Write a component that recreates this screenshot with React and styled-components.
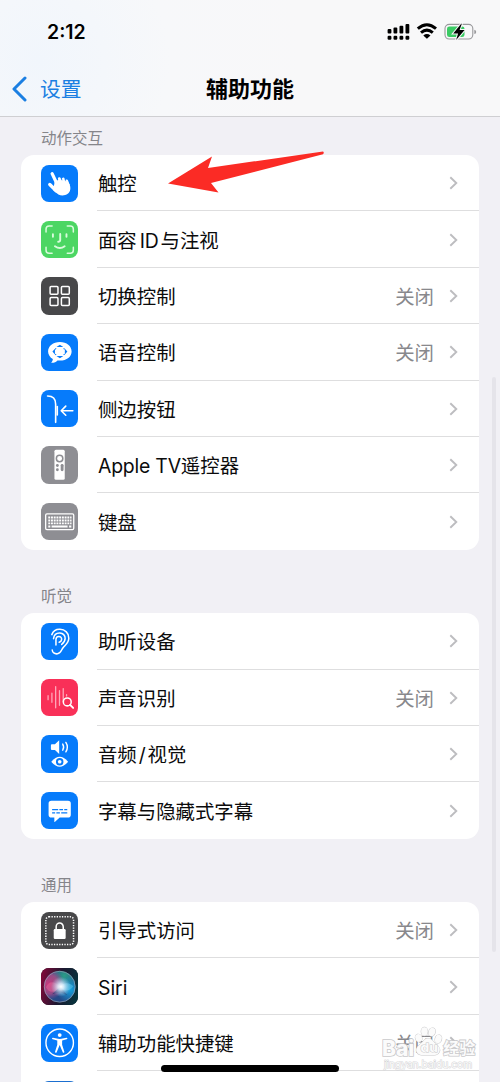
import React from "react";
import styled, { createGlobalStyle } from "styled-components";

const GlobalStyle = createGlobalStyle`
  html, body {
    margin: 0;
    padding: 0;
    background: #f1f0f5;
  }

  * {
    box-sizing: border-box;
  }
`;

const Phone = styled.div`
  position: relative;
  display: flex;
  flex-direction: column;
  width: 500px;
  height: 1082px;
  overflow: hidden;
  background: #f1f0f5;
  color: #0b0b0c;
  font-family: Inter, "Noto Sans CJK SC", sans-serif;
`;

const Header = styled.header`
  flex: none;
  height: 117px;
  border-bottom: 1px solid #cfcfd2;
  background: radial-gradient(circle at 40px 60px, #f1f6fc 0, #f7f8fa 130px, #f8f8f9 260px);
`;

const StatusBar = styled.div`
  display: flex;
  align-items: center;
  justify-content: space-between;
  height: 62px;
  padding: 2px 23px 0 47px;
  color: #000;
  font-size: 19.5px;
  font-weight: 600;
`;

const NavBar = styled.nav`
  display: grid;
  grid-template-columns: 1fr auto 1fr;
  align-items: center;
  height: 54px;
  padding: 0 12px;
`;

const Back = styled.a`
  display: flex;
  align-items: center;
  gap: 13px;
  color: #1b7fe2;
  font-size: 20.8px;
  line-height: 30px;

  span {
    padding-top: 2px;
  }
`;

const Title = styled.h1`
  margin: 0;
  color: #000;
  font-size: 22px;
  font-weight: 700;
  line-height: 30px;
`;

const Content = styled.main`
  flex: 1;
  min-height: 0;
  padding: 0 21px;
  overflow: hidden;
`;

const SectionLabel = styled.h2`
  display: flex;
  align-items: flex-end;
  height: ${(props) => (props.$first ? "38px" : "63.4px")};
  margin: 0;
  padding-left: 20px;
  color: #85858a;
  font-size: 15.5px;
  font-weight: 400;
  line-height: 33px;
`;

const Card = styled.div`
  overflow: hidden;
  border-radius: 13px;
  background: #fff;
`;

const Row = styled.div`
  display: flex;
  align-items: center;
  height: 56.4px;
  padding-left: 20px;
`;

const AppIcon = styled.svg`
  flex: none;
  display: block;
  width: 37.4px;
  height: 37.4px;
  margin-right: 18.6px;
  border-radius: 8px;
  background: ${(props) => props.$bg};
`;

const RowBody = styled.div`
  flex: 1;
  display: flex;
  align-items: center;
  height: 100%;
  padding: 1px 20px 0 1px;
  border-bottom: ${(props) => (props.$last ? "none" : "1px solid #dededf")};
`;

const RowText = styled.span`
  flex: 1;
  padding-top: 2px;
  font-size: 19.4px;
  line-height: 28px;
  white-space: nowrap;
`;

const Latin = styled.span`
  margin: 0 ${(props) => props.$right || 0}px 0 ${(props) => props.$left || 0}px;
  letter-spacing: -0.2px;
`;

const Value = styled.span`
  margin-right: 14px;
  padding-top: 2px;
  color: #88888c;
  font-size: 19.4px;
  line-height: 28px;
`;

const ScrollThumb = styled.div`
  position: absolute;
  top: 377px;
  right: 4px;
  width: 4px;
  height: 575px;
  border-radius: 2px;
  background: #e5e4ea;
`;

const HomeIndicator = styled.div`
  position: absolute;
  bottom: 10px;
  left: 161px;
  width: 178px;
  height: 7px;
  border-radius: 4px;
  background: #000;
`;

const Arrow = styled.svg`
  position: absolute;
  top: 150px;
  left: 166px;
`;

const Watermark = styled.div`
  position: absolute;
  top: 1026px;
  left: 382px;
  width: 94px;
  color: #fbfbfb;
  -webkit-text-stroke: 1.6px #c9c9cb;
  paint-order: stroke;
`;

const WatermarkBrand = styled.div`
  display: flex;
  align-items: flex-end;
  height: 31px;
  font-size: 21px;
  font-weight: 800;
  line-height: 17px;
`;

const WatermarkName = styled.span`
  font-size: 16px;
  font-weight: 700;
`;

const WatermarkUrl = styled.div`
  padding: 1px 0 0 2px;
  color: #fafafa;
  font-size: 10.2px;
  line-height: 13px;
  -webkit-text-stroke: 1px #d6d6d8;
`;

const HandIcon = () => (
  <AppIcon $bg="#067bfb" viewBox="0 0 37 37">
    <g fill="none" stroke="#fff" strokeLinecap="round">
      <path d="M11 8.500L16 19" strokeWidth="3.200" />
      <path d="M8.700 19.300L15 25.500" strokeWidth="3.300" />
      <path d="M18.200 13.600l1.600 4M22 14l1.600 4M25.400 15.800l1.200 3.200" strokeWidth="3" />
    </g>
    <path d="M13.500 16.500l4-2 8.500 1.500 2.300 3c1.500 4 .7 7.500-1.800 9.500-2.600 2-6.500 2.200-9.300.8L12 25z" fill="#fff" />
    <path d="M19.900 12.600l.9 2.400M23.600 13.600l.8 2.400" stroke="#067bfb" strokeWidth=".6" />
  </AppIcon>
);

const FaceIcon = () => (
  <AppIcon $bg="#4cd663" viewBox="0 0 37 37">
    <g fill="none" stroke="#d9fbdc" strokeWidth="1.500" strokeLinecap="round">
      <path d="M5 11V8q0-3 3-3h3M26 5h3q3 0 3 3v3M32 26v3q0 3-3 3h-3M11 32H8q-3 0-3-3v-3" />
      <path d="M11.800 13v2.600M25.200 13v2.600M19 12.800v6q0 1.800-2 1.700M13.800 25q4.900 3.500 9.600 0" strokeWidth="1.900" />
    </g>
  </AppIcon>
);

const SwitchIcon = () => (
  <AppIcon $bg="#48484a" viewBox="0 0 37 37">
    <g fill="none" stroke="#fff" strokeWidth="1.500">
      <rect x="9" y="9.300" width="7.800" height="7.800" rx="1" />
      <rect x="20.200" y="9.300" width="7.800" height="7.800" rx="1" />
      <rect x="9" y="20.400" width="7.800" height="7.800" rx="1" />
      <rect x="20.200" y="20.400" width="7.800" height="7.800" rx="1" />
    </g>
  </AppIcon>
);

const VoiceIcon = () => (
  <AppIcon $bg="#067bfb" viewBox="0 0 37 37">
    <path
      d="M18.700 8C12 8 7 12 7 17.300c0 3.200 1.900 5.800 4.700 7.500.1 1.500-.8 2.800-1.700 3.700 2.800.2 5-.9 6.300-2.300 8.200 1 14-3.300 14-8.900C30.300 12 25.400 8 18.700 8z"
      fill="#fff"
    />
    <path d="M15.300 12.800l3.400-2.200 3.400 2.200zM15.300 21.800l3.400 2.300 3.400-2.300zM13.800 14.500l-2.500 2.900 2.500 2.900zM23.600 14.500l2.500 2.900-2.500 2.900z" fill="#067bfb" />
    <path d="M15 14.200l-1 .9M22.400 14.200l1 .9M15 20.700l-1-.9M22.400 20.700l1-.9" stroke="#067bfb" strokeWidth="1" />
  </AppIcon>
);

const SideButtonIcon = () => (
  <AppIcon $bg="#067bfb" viewBox="0 0 37 37">
    <g fill="none" stroke="#fff" strokeLinecap="round" strokeLinejoin="round">
      <path d="M6.500 6c5.500 0 8 2.200 8 8v18" strokeWidth="1.600" />
      <path d="M16.100 16.300v8.500" strokeWidth="1.600" />
      <path d="M31.500 20.500H20.200M24.500 16l-4.500 4.500 4.500 4.500" strokeWidth="1.600" />
    </g>
  </AppIcon>
);

const RemoteIcon = () => (
  <AppIcon $bg="#8e8e93" viewBox="0 0 37 37">
    <rect x="13.300" y="3.800" width="10.200" height="29.500" rx="1.500" fill="#fff" />
    <circle cx="18.400" cy="12.300" r="3.200" fill="none" stroke="#8e8e93" strokeWidth="1.500" />
    <g fill="#8e8e93">
      <circle cx="16.200" cy="19.300" r="1.400" />
      <circle cx="20.900" cy="19.300" r="1.400" />
      <circle cx="16.200" cy="23.500" r="1.400" />
      <rect x="19.500" y="18.500" width="2.800" height="6.400" rx="1.400" />
    </g>
  </AppIcon>
);

const KeyboardIcon = () => (
  <AppIcon $bg="#8e8e93" viewBox="0 0 37 37">
    <rect x="4.600" y="10.700" width="27.800" height="15.700" rx="1.300" fill="none" stroke="#fff" strokeWidth="1.300" />
    <g stroke="#fff" strokeWidth="1.900" fill="none">
      <path d="M7.200 14.300h23M7.200 17.300h23M7.200 20.200h23" strokeDasharray="1.900 .8" />
      <path d="M7.200 23.200h2M10.500 23.200h15.800M27.800 23.200h2.200" />
    </g>
  </AppIcon>
);

const EarIcon = () => (
  <AppIcon $bg="#067bfb" viewBox="0 0 37 37">
    <g fill="none" stroke="#fff" strokeWidth="1.500" strokeLinecap="round">
      <path d="M10.700 11.500C12 8 15.200 6.200 18.700 6.300c5 .1 9 3.600 8.800 8.700-.1 4.500-3 6.300-5.500 9.200-2 2.400-2.200 5.800-5.700 6.300-3 .4-5-1.400-5.200-3.800" />
      <path d="M12.400 15.500c.5-3.900 3.100-5.700 6.300-5.600 3 .1 5.300 2.400 5.200 5.300 0 2.600-1.400 4.500-3.400 6" />
      <path d="M14.800 21.800v-5.500c0-1.800 1.200-3 2.800-3 2 0 3 1.400 2.800 3.200-.2 1.700-1.200 2.200-2.400 2.500" />
    </g>
  </AppIcon>
);

const SoundIcon = () => (
  <AppIcon $bg="#f93058" viewBox="0 0 37 37">
    <g fill="none" stroke="#ffa6b8" strokeWidth="1.300" strokeLinecap="round">
      <path d="M7 16.500v4M10.800 14v9M14.500 7.500v21M18.300 11.500v14.500M22 9.500v13M25.300 15.500v1.200" />
    </g>
    <circle cx="26" cy="22.700" r="3.900" fill="none" stroke="#fff" strokeWidth="1.500" />
    <path d="M28.800 25.600l3 3" stroke="#fff" strokeWidth="1.900" strokeLinecap="round" />
  </AppIcon>
);

const AudioVisualIcon = () => (
  <AppIcon $bg="#067bfb" viewBox="0 0 37 37">
    <path d="M10.800 9.200h3l4.200-3.900v13.400l-4.200-3.900h-3q-1 0-1-1v-3.600q0-1 1-1z" fill="#fff" />
    <path d="M21.500 9q1.800 3 0 6M24.600 7.300q3 4.700 0 9.400" fill="none" stroke="#fff" strokeWidth="1.400" strokeLinecap="round" />
    <path d="M10.200 26.500Q18.500 16.500 26.800 26.500 18.500 36.500 10.200 26.500z" fill="#fff" />
    <circle cx="18.500" cy="26.500" r="3.700" fill="#067bfb" />
    <circle cx="18.500" cy="26.500" r="1.800" fill="#fff" />
  </AppIcon>
);

const CaptionIcon = () => (
  <AppIcon $bg="#067bfb" viewBox="0 0 37 37">
    <path d="M10.300 8.700h16.400q2.800 0 2.800 2.800v11q0 2.800-2.800 2.800h-8.200l-4.600 4.200q-.7.500-.7-.4v-3.800h-2.900q-2.800 0-2.800-2.800v-11q0-2.800 2.800-2.800z" fill="#fff" />
    <path d="M11 17.500h6M18.200 17.500h3.600M23 17.500h3M11 20.700h3M15.200 20.700h3.500M20 20.700h6" stroke="#067bfb" strokeWidth="1.300" />
  </AppIcon>
);

const GuidedIcon = () => (
  <AppIcon $bg="#48484a" viewBox="0 0 37 37">
    <rect x="4.800" y="4.800" width="27.400" height="27.400" rx="3" fill="none" stroke="#fff" strokeWidth="1.500" strokeDasharray="1.300 1.280" />
    <rect x="12.600" y="16.800" width="11.800" height="10" rx="1.200" fill="#fff" />
    <path d="M15 17v-2.500a3.500 3.500 0 0 1 7 0V17" fill="none" stroke="#fff" strokeWidth="1.500" />
  </AppIcon>
);

const SiriIcon = () => (
  <AppIcon $bg="#16101e" viewBox="0 0 37 37">
    <defs>
      <linearGradient id="siriBack" x1="0" y1="0.400" x2="1" y2="0.600">
        <stop offset="0" stopColor="#7a0a38" />
        <stop offset=".5" stopColor="#1c1830" />
        <stop offset="1" stopColor="#06343d" />
      </linearGradient>
      <radialGradient id="siriPink" cx=".15" cy=".42" r=".5">
        <stop offset="0" stopColor="#c93a7c" />
        <stop offset=".6" stopColor="#b04a86" stopOpacity=".8" />
        <stop offset="1" stopColor="#a04a90" stopOpacity="0" />
      </radialGradient>
      <radialGradient id="siriTeal" cx=".65" cy=".15" r=".5">
        <stop offset="0" stopColor="#2b9c86" />
        <stop offset="1" stopColor="#2b9c86" stopOpacity="0" />
      </radialGradient>
      <radialGradient id="siriBlue" cx=".85" cy=".6" r=".45">
        <stop offset="0" stopColor="#14a0dc" />
        <stop offset="1" stopColor="#14a0dc" stopOpacity="0" />
      </radialGradient>
      <radialGradient id="siriGlow" cx=".54" cy=".5" r=".32">
        <stop offset="0" stopColor="#fff" />
        <stop offset=".3" stopColor="#e6f4ff" stopOpacity=".85" />
        <stop offset="1" stopColor="#a8d8f4" stopOpacity="0" />
      </radialGradient>
    </defs>
    <rect width="37" height="37" fill="url(#siriBack)" />
    <circle cx="18.500" cy="18.500" r="15.500" fill="#254a88" />
    <circle cx="18.500" cy="18.500" r="15.500" fill="url(#siriTeal)" />
    <circle cx="18.500" cy="18.500" r="15.500" fill="url(#siriPink)" />
    <circle cx="18.500" cy="18.500" r="15.500" fill="url(#siriBlue)" />
    <path d="M5 19c3-7 9-6 14 0-4 5-11 7-14 0z" fill="#e46a9c" opacity=".5" />
    <path d="M18 19c4-5 10-5 14-1-3 5-10 6-14 1z" fill="#5ecbee" opacity=".5" />
    <path d="M11 26l8-8 7 9-7-3z" fill="#0f2a62" opacity=".5" />
    <circle cx="18.500" cy="18.500" r="15.500" fill="url(#siriGlow)" />
    <circle cx="18.500" cy="18.500" r="15.300" fill="none" stroke="#a3adb8" strokeOpacity=".75" strokeWidth=".8" />
  </AppIcon>
);

const AccessIcon = () => (
  <AppIcon $bg="#067bfb" viewBox="0 0 37 37">
    <circle cx="18.500" cy="18.500" r="13.600" fill="none" stroke="#fff" strokeWidth="1.400" />
    <circle cx="18.500" cy="11" r="1.900" fill="#fff" />
    <path
      d="M11.800 13.700l5 1q1.700.3 3.400 0l5-1q.9 0 .9.600t-.7.800l-4.500 1.300v4.100l2.200 7q.1.900-.6 1t-1-.600l-3-7-3 7q-.3.700-1 .600t-.6-1l2.200-7v-4.100l-4.500-1.300q-.7-.2-.7-.8t.9-.600z"
      fill="#fff"
    />
  </AppIcon>
);

const PlainIcon = () => <AppIcon $bg="#1b6fd0" viewBox="0 0 37 37" />;

const Chevron = () => (
  <svg width="11" height="14" viewBox="0 0 11 14" fill="none">
    <path d="M2.300 1.200L8.300 7l-6 5.800" stroke="#bdbdc0" strokeWidth="1.900" />
  </svg>
);

const StatusIcons = () => (
  <svg width="90" height="20" viewBox="387 22 90 20">
    <g fill="#000">
      <rect x="387.600" y="29" width="3.800" height="4.500" rx="1" />
      <rect x="393.500" y="27.500" width="3.800" height="6" rx="1" />
      <rect x="399.500" y="25.800" width="3.800" height="7.700" rx="1" />
      <rect x="405.500" y="24" width="3.800" height="9.500" rx="1" />
      <rect x="387.600" y="35.800" width="3.800" height="4" rx="1.200" />
      <rect x="393.500" y="35.800" width="3.800" height="4" rx="1.200" />
      <rect x="399.500" y="35.800" width="3.800" height="4" rx="1.200" />
      <rect x="405.500" y="35.800" width="3.800" height="4" rx="1.200" />
      <path d="M423.300 35.400q3.600-2.600 7.200 0l-3.600 3.400z" />
    </g>
    <path d="M417.800 28.700q9.100-8 18.200 0M421 32.600q5.900-5 11.800 0" fill="none" stroke="#000" strokeWidth="3" />
    <rect x="445" y="24.400" width="27.800" height="14.600" rx="4.200" fill="none" stroke="#98989b" strokeWidth="1.100" />
    <path d="M474.300 29.700q1.900.5 1.900 2.200t-1.900 2.200z" fill="#98989b" />
    <rect x="447" y="26.400" width="17.500" height="10.700" rx="2.400" fill="#3bcb64" />
    <path d="M461.200 23.800l-8 9.600h4.900l-2 6.600 8.500-10h-5l2.200-6.200z" fill="#000" stroke="#f8f8f9" strokeWidth="2" paintOrder="stroke" />
  </svg>
);

const Paw = () => (
  <svg width="29" height="31" viewBox="0 0 25 31" preserveAspectRatio="none" fill="#fbfbfb" stroke="#c6c6c8" strokeWidth=".9">
    <ellipse cx="4" cy="12" rx="2.800" ry="3.900" transform="rotate(-15 4 12)" />
    <ellipse cx="9" cy="5.500" rx="2.800" ry="4.200" />
    <ellipse cx="15.500" cy="6" rx="2.800" ry="4.200" transform="rotate(12 15.500 6)" />
    <ellipse cx="21" cy="13" rx="2.800" ry="4.200" transform="rotate(12 21 13)" />
    <path d="M12 12.500c3 0 4 2.300 6 4.500 3 2.700 5 5 4 8.500-1.500 4.500-5.500 3.500-10 3.500s-8 .8-9.700-3c-1.300-3.500 1-6 3.700-8.500 2.200-2.200 3-5 6-5z" />
    <text x="5.500" y="26" fontSize="12" fontWeight="700">du</text>
  </svg>
);

const sections = [
  {
    title: "动作交互",
    rows: [
      { icon: HandIcon, text: "触控" },
      { icon: FaceIcon, text: <>面容<Latin $left={3} $right={2}>ID</Latin>与注视</> },
      { icon: SwitchIcon, text: "切换控制", value: "关闭" },
      { icon: VoiceIcon, text: "语音控制", value: "关闭" },
      { icon: SideButtonIcon, text: "侧边按钮" },
      { icon: RemoteIcon, text: <><Latin>Apple TV</Latin>遥控器</> },
      { icon: KeyboardIcon, text: "键盘" },
    ],
  },
  {
    title: "听觉",
    rows: [
      { icon: EarIcon, text: "助听设备" },
      { icon: SoundIcon, text: "声音识别", value: "关闭" },
      { icon: AudioVisualIcon, text: <>音频<Latin $left={2} $right={2}>/</Latin>视觉</> },
      { icon: CaptionIcon, text: "字幕与隐藏式字幕" },
    ],
  },
  {
    title: "通用",
    rows: [
      { icon: GuidedIcon, text: "引导式访问", value: "关闭" },
      { icon: SiriIcon, text: "Siri" },
      { icon: AccessIcon, text: "辅助功能快捷键", value: "关闭" },
      { icon: PlainIcon, text: "" },
    ],
  },
];

const App = () => {
  return (
    <Phone>
      <GlobalStyle />
      <Header>
        <StatusBar>
          <span>2:12</span>
          <StatusIcons />
        </StatusBar>
        <NavBar>
          <Back>
            <svg width="15" height="26" viewBox="0 0 15 26" fill="none">
              <path d="M13 2L2 13l11 11" stroke="#1b7fe2" strokeWidth="3" strokeLinecap="round" strokeLinejoin="round" />
            </svg>
            <span>设置</span>
          </Back>
          <Title>辅助功能</Title>
        </NavBar>
      </Header>

      <Content>
        {sections.map((section, i) => (
          <section key={section.title}>
            <SectionLabel $first={i === 0}>{section.title}</SectionLabel>
            <Card>
              {section.rows.map((row, j) => {
                const Icon = row.icon;
                return (
                  <Row key={j}>
                    <Icon />
                    <RowBody $last={j === section.rows.length - 1}>
                      <RowText>{row.text}</RowText>
                      {row.value && <Value>{row.value}</Value>}
                      <Chevron />
                    </RowBody>
                  </Row>
                );
              })}
            </Card>
          </section>
        ))}
      </Content>

      <ScrollThumb />
      <Arrow width="160" height="46" viewBox="166 150 160 46">
        <path d="M168 183.500L212 156.500l-4 11.500 115-16.500q1.500 1.200 0 2.700L211 183l7.500 9.500z" fill="#fb2b25" />
      </Arrow>
      <Watermark>
        <WatermarkBrand>
          Bai
          <Paw />
          <WatermarkName>经验</WatermarkName>
        </WatermarkBrand>
        <WatermarkUrl>jingyan.baidu.com</WatermarkUrl>
      </Watermark>
      <HomeIndicator />
    </Phone>
  );
};

export default App;
